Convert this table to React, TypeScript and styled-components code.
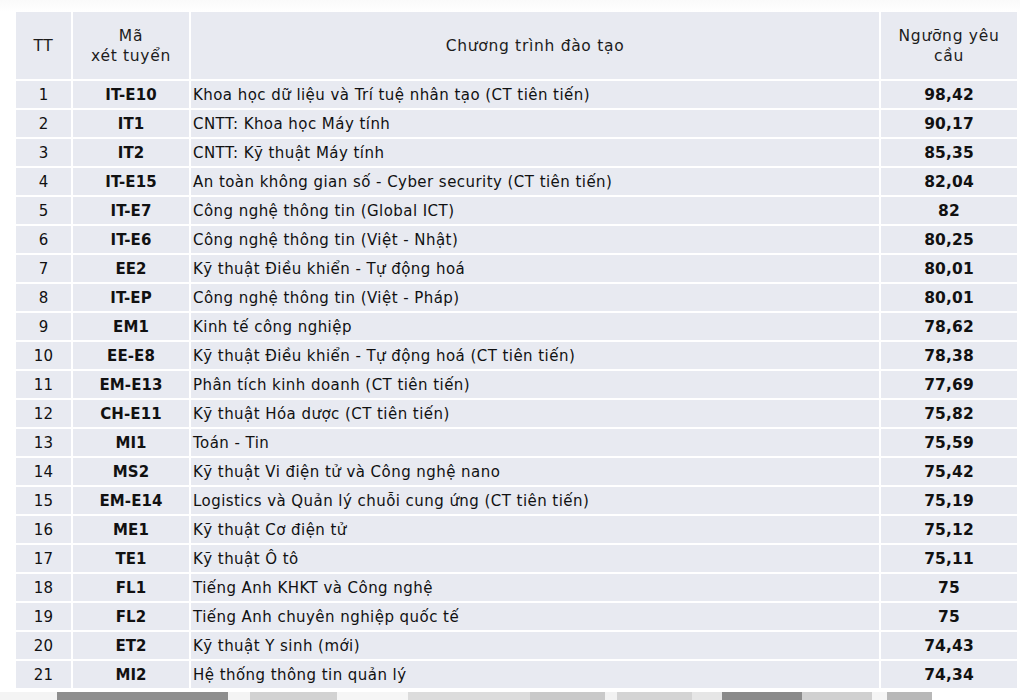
import styled, {createGlobalStyle} from 'styled-components';

type Row = {
  code: string,
  name: string,
  score: string,
}

const rows: Row[] = [
  {code: 'IT-E10', name: 'Khoa học dữ liệu và Trí tuệ nhân tạo (CT tiên tiến)', score: '98,42'},
  {code: 'IT1', name: 'CNTT: Khoa học Máy tính', score: '90,17'},
  {code: 'IT2', name: 'CNTT: Kỹ thuật Máy tính', score: '85,35'},
  {code: 'IT-E15', name: 'An toàn không gian số - Cyber security (CT tiên tiến)', score: '82,04'},
  {code: 'IT-E7', name: 'Công nghệ thông tin (Global ICT)', score: '82'},
  {code: 'IT-E6', name: 'Công nghệ thông tin (Việt - Nhật)', score: '80,25'},
  {code: 'EE2', name: 'Kỹ thuật Điều khiển - Tự động hoá', score: '80,01'},
  {code: 'IT-EP', name: 'Công nghệ thông tin (Việt - Pháp)', score: '80,01'},
  {code: 'EM1', name: 'Kinh tế công nghiệp', score: '78,62'},
  {code: 'EE-E8', name: 'Kỹ thuật Điều khiển - Tự động hoá (CT tiên tiến)', score: '78,38'},
  {code: 'EM-E13', name: 'Phân tích kinh doanh (CT tiên tiến)', score: '77,69'},
  {code: 'CH-E11', name: 'Kỹ thuật Hóa dược (CT tiên tiến)', score: '75,82'},
  {code: 'MI1', name: 'Toán - Tin', score: '75,59'},
  {code: 'MS2', name: 'Kỹ thuật Vi điện tử và Công nghệ nano', score: '75,42'},
  {code: 'EM-E14', name: 'Logistics và Quản lý chuỗi cung ứng (CT tiên tiến)', score: '75,19'},
  {code: 'ME1', name: 'Kỹ thuật Cơ điện tử', score: '75,12'},
  {code: 'TE1', name: 'Kỹ thuật Ô tô', score: '75,11'},
  {code: 'FL1', name: 'Tiếng Anh KHKT và Công nghệ', score: '75'},
  {code: 'FL2', name: 'Tiếng Anh chuyên nghiệp quốc tế', score: '75'},
  {code: 'ET2', name: 'Kỹ thuật Y sinh (mới)', score: '74,43'},
  {code: 'MI2', name: 'Hệ thống thông tin quản lý', score: '74,34'},
];

// grey blocks of the photo peeking out under the table
const strip = [
  {w: 57, c: '#f4f4f4'},
  {w: 171, c: '#8e8e8e'},
  {w: 22, c: '#f4f4f4'},
  {w: 87, c: '#d2d2d2'},
  {w: 71, c: '#f6f6f6'},
  {w: 122, c: '#dcdcdc'},
  {w: 75, c: '#c9c9c9'},
  {w: 12, c: '#f2f2f2'},
  {w: 75, c: '#d4d4d4'},
  {w: 30, c: '#e6e6e6'},
  {w: 80, c: '#8a8a8a'},
  {w: 70, c: '#d0d0d0'},
  {w: 15, c: '#f5f5f5'},
  {w: 45, c: '#b8b8b8'},
];

const App = () => {
  return (
    <Page>
      <GlobalStyle />
      <Table>
        <colgroup>
          <col style={{width: 56}} />
          <col style={{width: 118}} />
          <col style={{width: 690}} />
          <col style={{width: 137}} />
        </colgroup>
        <thead>
          <tr>
            <HeadCell>TT</HeadCell>
            <HeadCell>Mã<br />xét tuyển</HeadCell>
            <HeadCell>Chương trình đào tạo</HeadCell>
            <HeadCell>Ngưỡng yêu<br />cầu</HeadCell>
          </tr>
        </thead>
        <tbody>
          {rows.map((row, i) => (
            <tr key={row.code}>
              <IndexCell>{i + 1}</IndexCell>
              <CodeCell>{row.code}</CodeCell>
              <NameCell>{row.name}</NameCell>
              <ScoreCell>{row.score}</ScoreCell>
            </tr>
          ))}
        </tbody>
      </Table>
      <Strip>
        {strip.map((s, i) => <StripBlock key={i} $w={s.w} $c={s.c} />)}
      </Strip>
    </Page>
  );
};

export default App;

const GlobalStyle = createGlobalStyle`
  html, body {
    margin: 0;
    padding: 0;
    background: #ffffff;
  }
`;

const Page = styled.div`
  width: 1020px;
  height: 700px;
  overflow: hidden;
  padding: 12px 0 0 16px;
  box-sizing: border-box;
  background: linear-gradient(180deg, #fafafa 0px, #ffffff 12px);
  font-family: "DejaVu Sans", Verdana, sans-serif;
  color: #111111;
`;

const Table = styled.table`
  width: 1001px;
  border-collapse: collapse;
  table-layout: fixed;
`;

const Cell = styled.td`
  background: #e8eaf1;
  border: 2px solid #ffffff;
  height: 26px;
  padding: 1px 0 0;
  font-size: 15px;
  line-height: 18px;
  letter-spacing: 0.1px;
  white-space: nowrap;
  &:first-child {
    border-left: none;
  }
  &:last-child {
    border-right: none;
  }
`;

const HeadCell = styled(Cell).attrs({as: 'th'})`
  height: 67px;
  padding: 0;
  border-top: none;
  font-weight: normal;
  font-size: 15.5px;
  letter-spacing: 0.7px;
  text-align: center;
  line-height: 20px;
  color: #1c1c1c;
`;

const IndexCell = styled(Cell)`
  text-align: center;
`;

const CodeCell = styled(Cell)`
  text-align: center;
  font-weight: bold;
`;

const NameCell = styled(Cell)`
  text-align: left;
  padding-left: 2px;
  letter-spacing: 0.45px;
`;

const ScoreCell = styled(Cell)`
  text-align: center;
  font-weight: bold;
  font-size: 15.5px;
`;

const Strip = styled.div`
  display: flex;
  margin: 2px 0 0 -16px;
  height: 12px;
`;

const StripBlock = styled.div<{$w: number, $c: string}>`
  width: ${p => p.$w}px;
  flex-shrink: 0;
  background: ${p => p.$c};
`;
